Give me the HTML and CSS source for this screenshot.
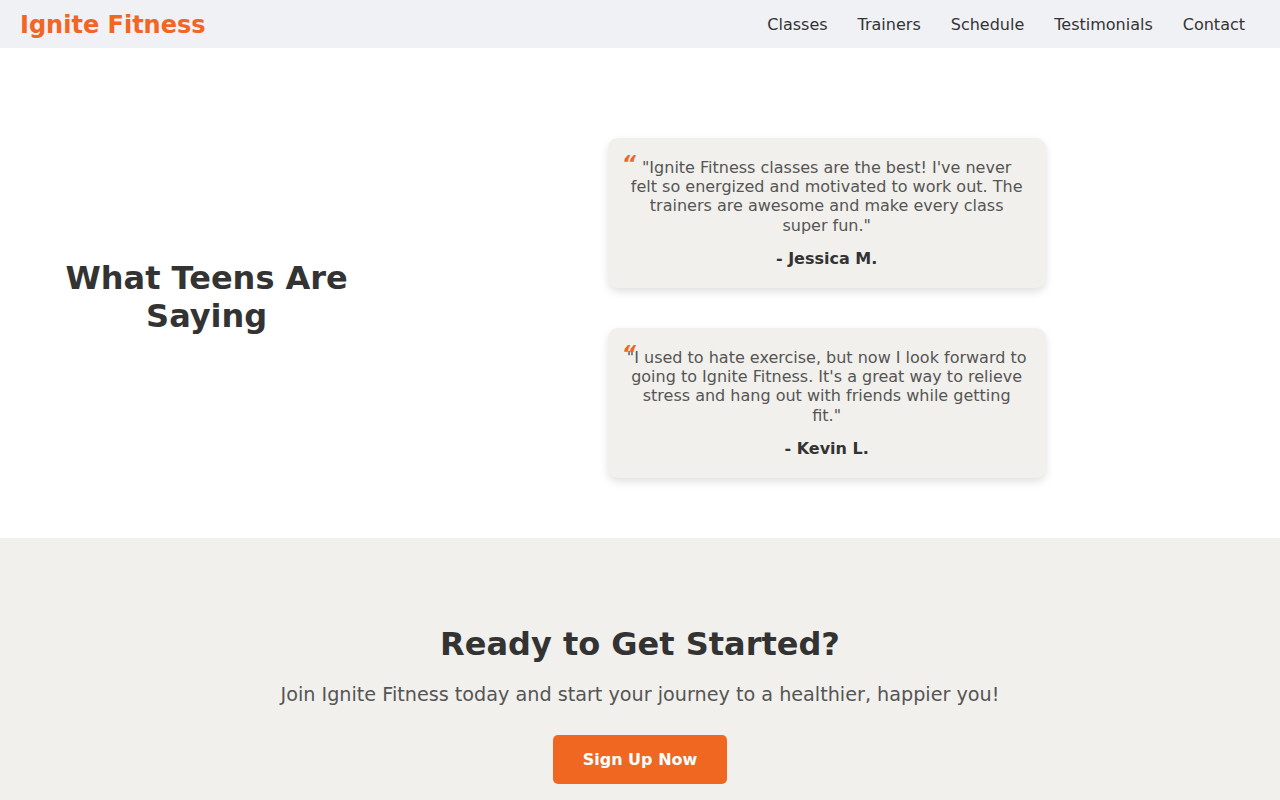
FILE: index.html
```html
<!DOCTYPE html>
<html lang="en">
<head>
<meta charset="utf-8">
<title>Ignite Fitness</title>
<link rel="stylesheet" href="styles.css">
</head>
<body>
<header class="navbar">
  <a class="logo" href="#">Ignite Fitness</a>
  <nav class="nav-links">
    <a href="#">Classes</a>
    <a href="#">Trainers</a>
    <a href="#">Schedule</a>
    <a href="#">Testimonials</a>
    <a href="#">Contact</a>
  </nav>
</header>

<section class="testimonials">
  <div class="testimonials-title">
    <h2>What Teens Are Saying</h2>
  </div>
  <div class="testimonial-list">
    <div class="testimonial-card">
      <p class="quote">"Ignite Fitness classes are the best! I've never felt so energized and motivated to work out. The trainers are awesome and make every class super fun."</p>
      <p class="author">- Jessica M.</p>
    </div>
    <div class="testimonial-card">
      <p class="quote">"I used to hate exercise, but now I look forward to going to Ignite Fitness. It's a great way to relieve stress and hang out with friends while getting fit."</p>
      <p class="author">- Kevin L.</p>
    </div>
  </div>
</section>

<section class="cta">
  <h2>Ready to Get Started?</h2>
  <p>Join Ignite Fitness today and start your journey to a healthier, happier you!</p>
  <a class="btn" href="#">Sign Up Now</a>
</section>
</body>
</html>
```

FILE: styles.css
```css
* { box-sizing: border-box; }

html, body {
  margin: 0;
  padding: 0;
}

body {
  font-family: "DejaVu Sans", sans-serif;
  line-height: 1.2;
  color: #333;
  background: #fff;
}

a { text-decoration: none; }

.navbar {
  height: 48px;
  background: #f0f1f5;
  display: flex;
  align-items: center;
  justify-content: space-between;
  padding: 2px 20px 0;
}

.logo {
  color: #f26522;
  font-size: 24px;
  font-weight: bold;
}

.nav-links {
  display: flex;
}

.nav-links a {
  color: #333;
  font-size: 16px;
  padding: 0 15px;
}

.testimonials {
  display: grid;
  grid-template-columns: 1fr 2fr;
  align-items: center;
  padding: 90px 40px 60px 0;
}

.testimonials-title {
  text-align: center;
}

.testimonials-title h2 {
  font-size: 32px;
  margin: 0 0 22px;
  color: #333;
}

.testimonial-list {
  display: flex;
  flex-direction: column;
  align-items: center;
  gap: 40px;
}

.testimonial-card {
  position: relative;
  width: 438px;
  background: #f1f0ec;
  border-radius: 10px;
  box-shadow: 0 4px 8px rgba(0, 0, 0, 0.12);
  padding: 20px 19px;
  text-align: center;
}

.testimonial-card::before {
  content: "\201C";
  position: absolute;
  top: 15px;
  left: 14px;
  font-size: 22px;
  font-style: italic;
  font-weight: bold;
  color: #f26522;
  line-height: 1;
}

.quote {
  margin: 0 0 14px;
  font-size: 16px;
  color: #555;
}

.author {
  margin: 0;
  font-size: 16px;
  font-weight: bold;
  color: #333;
}

.cta {
  background: #f1f0ec;
  text-align: center;
  padding: 87px 20px 60px;
}

.cta h2 {
  font-size: 32px;
  margin: 0 0 20px;
  color: #333;
}

.cta p {
  font-size: 19.2px;
  color: #555;
  margin: 0 0 29px;
}

.btn {
  display: inline-block;
  background: #f06722;
  color: #fff;
  font-weight: bold;
  font-size: 16px;
  padding: 15px 30px;
  border-radius: 5px;
}
```
